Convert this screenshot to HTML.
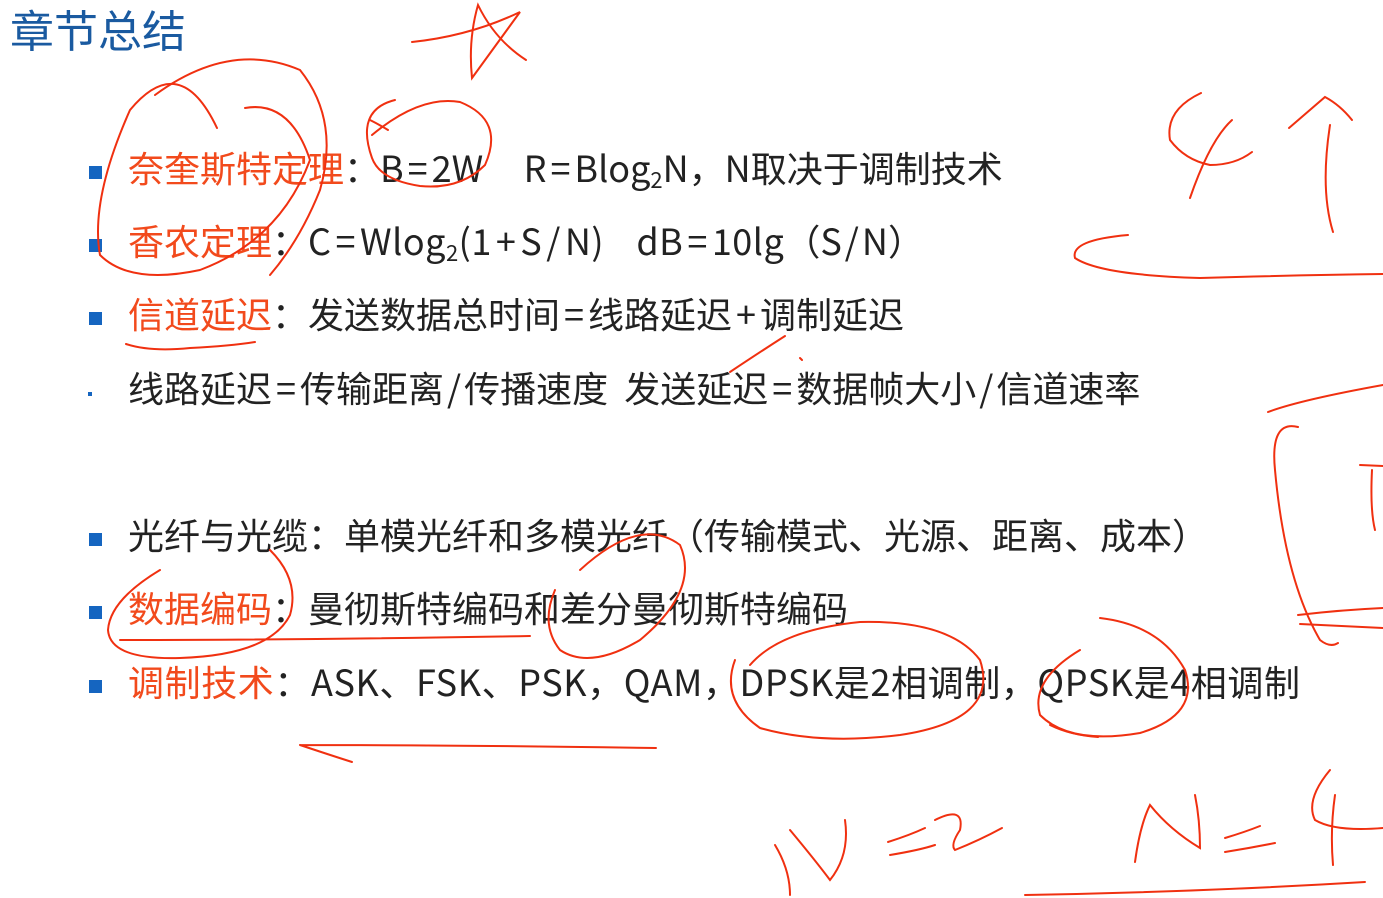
<!DOCTYPE html>
<html><head><meta charset="utf-8">
<style>
body{margin:0;width:1383px;height:898px;background:#fff;overflow:hidden;position:relative;font-family:"Noto Sans CJK SC","Liberation Sans",sans-serif;}
.t{position:absolute;left:10px;top:-2px;font-size:44px;color:#1a5aa0;line-height:60px}
.l{position:absolute;left:128px;font-size:36px;color:#222;line-height:50px;white-space:nowrap}
.r{color:#f24a1c}
.o{margin:0 4px}
.p{margin:0 3px}
.s{letter-spacing:0.5px}
.b{position:absolute;left:89px;width:13px;height:13px;background:#1565c0}
sub{font-size:22px;vertical-align:-6px;line-height:0}
svg{position:absolute;left:0;top:0}
</style></head><body>
<div class="t">章节总结</div>
<div class="b" style="top:166px"></div>
<div class="l" style="top:142px"><span class="r">奈奎斯特定理</span>：B<span class="o">=</span>2W &nbsp; &nbsp; R<span class="o">=</span>Blog<sub>2</sub>N，N取决于调制技术</div>
<div class="b" style="top:239px"></div>
<div class="l" style="top:215px"><span class="r">香农定理</span>：<span class="s">C<span class="o">=</span>Wlog<sub>2</sub>(1<span class="o">+</span>S<span class="o">/</span>N)</span> &nbsp; &nbsp;<span class="s">dB<span class="o">=</span>10lg</span>（S<span class="p">/</span>N）</div>
<div class="b" style="top:312px"></div>
<div class="l" style="top:288px"><span class="r">信道延迟</span>：发送数据总时间<span class="o">=</span>线路延迟<span class="o">+</span>调制延迟</div>
<div style="position:absolute;left:88px;top:392px;width:4px;height:4px;background:#1565c0"></div>
<div class="l" style="top:362px">线路延迟<span class="o">=</span>传输距离<span class="p">/</span>传播速度 &nbsp;发送延迟<span class="o">=</span>数据帧大小<span class="p">/</span>信道速率</div>
<div class="b" style="top:533px"></div>
<div class="l" style="top:509px">光纤与光缆：单模光纤和多模光纤（传输模式、光源、距离、成本）</div>
<div class="b" style="top:606px"></div>
<div class="l" style="top:582px"><span class="r">数据编码</span>：曼彻斯特编码和差分曼彻斯特编码</div>
<div class="b" style="top:680px"></div>
<div class="l" style="top:656px;letter-spacing:0.6px"><span class="r">调制技术</span>：ASK、FSK、PSK，QAM，DPSK是2相调制，QPSK是4相调制</div>
<svg width="1383" height="898" fill="none" stroke="#f03010" stroke-width="2" stroke-linecap="round">
<path d="M412 42 Q470 36 520 12 L472 78 Q468 40 478 5 Q495 40 526 60"/>
<path d="M217 128 Q180 50 130 110 Q90 200 100 255 Q130 285 200 270 Q280 240 310 160 Q290 100 245 108"/>
<path d="M155 95 Q230 40 300 70 Q340 120 320 190 Q300 240 270 275"/>
<path d="M372 158 Q355 110 395 100 M370 120 Q380 125 388 130 M372 135 Q420 95 460 102 Q505 120 485 165 Q460 190 420 186 Q380 180 372 158"/>
<path d="M126 344 Q150 352 190 348 Q230 346 255 342"/>
<path d="M730 372 Q760 352 785 336 M800 358 L802 360"/>
<path d="M270 550 Q300 580 290 615 Q270 655 180 658 Q110 660 108 630 Q110 600 160 570"/>
<path d="M120 640 Q300 640 530 636"/>
<path d="M580 570 Q640 515 680 545 Q700 590 640 640 Q590 670 560 650 Q540 625 555 590"/>
<path d="M735 660 Q720 700 760 728 Q820 745 900 735 Q1000 720 980 660 Q950 620 860 622 Q780 630 750 665"/>
<path d="M1080 650 Q1030 680 1040 715 Q1070 745 1140 733 Q1200 715 1185 670 Q1160 625 1100 618"/>
<path d="M1050 725 Q1070 735 1098 737"/>
<path d="M300 745 Q450 745 656 748 M300 745 Q330 755 352 762"/>
<path d="M1201 93 Q1165 110 1170 140 Q1185 160 1210 165 Q1235 165 1252 152 M1232 120 Q1210 140 1190 198"/>
<path d="M1289 128 Q1310 110 1325 97 Q1340 105 1352 120 M1330 125 Q1320 190 1333 232"/>
<path d="M1128 235 Q1070 240 1075 258 Q1100 275 1200 278 Q1300 275 1383 274"/>
<path d="M1268 412 Q1300 400 1383 385"/>
<path d="M1298 427 Q1270 420 1275 470 Q1285 580 1320 640 Q1330 648 1338 643"/>
<path d="M1298 615 Q1340 610 1383 608 M1300 624 Q1340 626 1383 628"/>
<path d="M1360 465 L1383 466 M1372 470 Q1370 510 1375 530"/>
<path d="M775 845 Q790 870 790 895 M790 830 Q815 860 830 880 Q850 855 845 820"/>
<path d="M888 842 Q910 835 925 828 M890 855 Q920 850 935 845"/>
<path d="M935 820 Q965 805 960 830 Q950 845 955 850 Q980 840 1002 828"/>
<path d="M1135 862 Q1140 825 1150 805 Q1170 830 1200 848 Q1200 820 1195 795"/>
<path d="M1225 838 Q1245 832 1260 826 M1225 852 Q1250 848 1275 843"/>
<path d="M1330 770 Q1305 800 1315 820 Q1335 832 1383 828 M1335 795 Q1330 830 1333 865"/>
<path d="M1025 895 Q1200 892 1365 882"/>
</svg>
</body></html>
